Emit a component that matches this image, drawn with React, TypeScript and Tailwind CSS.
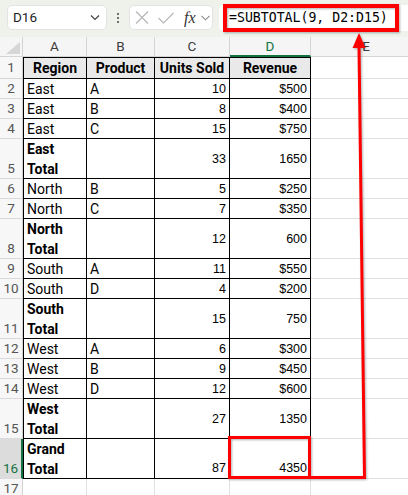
import React from "react";

type Row = {
  n: number;
  a?: string;
  b?: string;
  c?: string;
  d?: string;
  tall?: boolean;
  bold?: boolean;
  sel?: boolean;
};

const rows: Row[] = [
  { n: 2, a: "East", b: "A", c: "10", d: "$500" },
  { n: 3, a: "East", b: "B", c: "8", d: "$400" },
  { n: 4, a: "East", b: "C", c: "15", d: "$750" },
  { n: 5, a: "East Total", c: "33", d: "1650", tall: true, bold: true },
  { n: 6, a: "North", b: "B", c: "5", d: "$250" },
  { n: 7, a: "North", b: "C", c: "7", d: "$350" },
  { n: 8, a: "North Total", c: "12", d: "600", tall: true, bold: true },
  { n: 9, a: "South", b: "A", c: "11", d: "$550" },
  { n: 10, a: "South", b: "D", c: "4", d: "$200" },
  { n: 11, a: "South Total", c: "15", d: "750", tall: true, bold: true },
  { n: 12, a: "West", b: "A", c: "6", d: "$300" },
  { n: 13, a: "West", b: "B", c: "9", d: "$450" },
  { n: 14, a: "West", b: "D", c: "12", d: "$600" },
  { n: 15, a: "West Total", c: "27", d: "1350", tall: true, bold: true },
  { n: 16, a: "Grand Total", c: "87", d: "4350", tall: true, bold: true, sel: true },
];

const numFont = { fontFamily: '"Liberation Sans", Arial, sans-serif' };

function DataRow({ r }: { r: Row }) {
  const h = r.tall ? "h-[40px]" : "h-[20px]";
  const valJustify = r.sel ? "justify-end" : "justify-center";
  return (
    <div className={`flex ${h}`}>
      <div
        className={`w-[23px] shrink-0 flex items-end justify-center leading-[20px] text-[13.5px] border-b border-[#dadada] ${
          r.sel
            ? "bg-[#dcdcdc] text-[#137340] border-r-2 border-r-[#137340]"
            : "bg-[#f7f7f7] text-[#555] border-r border-r-[#d4d4d4]"
        }`}
      >
        {r.n}
      </div>
      <div
        className={`w-[64px] shrink-0 border-l border-r border-b border-black px-[3px] flex flex-col justify-center leading-[20px] text-[14px] text-black ${
          r.bold ? "font-bold" : ""
        }`}
      >
        {r.tall ? (
          <>
            <span>{r.a!.split(" ")[0]}</span>
            <span>{r.a!.split(" ")[1]}</span>
          </>
        ) : (
          <span>{r.a}</span>
        )}
      </div>
      <div className="w-[68px] shrink-0 border-r border-b border-black px-[3px] flex flex-col justify-center leading-[20px] text-[14px] text-black">
        <span>{r.b}</span>
      </div>
      <div
        className={`w-[75px] shrink-0 border-r border-b border-black px-[3px] flex flex-col ${valJustify} items-end leading-[20px] text-[12.5px] text-black`}
        style={numFont}
      >
        <span>{r.c}</span>
      </div>
      <div
        className={`w-[81px] shrink-0 border-r border-b border-black px-[3px] flex flex-col ${valJustify} items-end leading-[20px] text-[12.5px] text-black`}
        style={numFont}
      >
        <span>{r.d}</span>
      </div>
      <div className="w-[110px] shrink-0 border-b border-r border-[#e1e1e1]" />
    </div>
  );
}

export default function App() {
  return (
    <div
      className="relative w-[408px] h-[495px] overflow-hidden bg-white"
      style={{ fontFamily: 'Roboto, "Noto Sans", sans-serif' }}
    >
      {/* Toolbar */}
      <div className="h-[37px] bg-[#eef2eb] flex items-start pt-[5px] pl-[7px]">
        <div className="w-[100px] h-[25px] bg-white rounded-[5px] border border-[#e3e3e3] flex items-center justify-between pl-[5px] pr-[6px]">
          <span className="text-[13.5px] text-[#1f1f1f]">D16</span>
          <svg width="10" height="7" viewBox="0 0 10 7">
            <path d="M1 1.5 L5 5.5 L9 1.5" fill="none" stroke="#444" strokeWidth="1.2" />
          </svg>
        </div>
        <div className="w-[22px] h-[25px] flex flex-col items-center justify-center gap-[2px]">
          <span className="w-[2px] h-[2px] bg-[#444] rounded-full" />
          <span className="w-[2px] h-[2px] bg-[#444] rounded-full" />
          <span className="w-[2px] h-[2px] bg-[#444] rounded-full" />
        </div>
        <div className="w-[84px] h-[25px] bg-white rounded-[5px] border border-[#e3e3e3] flex items-center pl-[5px]">
          <svg width="14" height="13" viewBox="0 0 14 13">
            <path d="M1 0.5 L13 12.5 M13 0.5 L1 12.5" stroke="#b5b5b5" strokeWidth="1.1" fill="none" />
          </svg>
          <svg width="16" height="12" viewBox="0 0 16 12" className="ml-[9px]">
            <path d="M0.5 6 L5.5 11 L15.5 1" stroke="#b5b5b5" strokeWidth="1.1" fill="none" />
          </svg>
          <span
            className="ml-[10px] text-[16px] italic text-[#333] leading-none"
            style={{ fontFamily: '"Liberation Serif", "DejaVu Serif", serif' }}
          >
            fx
          </span>
          <svg width="9" height="6" viewBox="0 0 9 6" className="ml-[5px]">
            <path d="M0.5 0.8 L4.5 4.8 L8.5 0.8" fill="none" stroke="#888" strokeWidth="1.1" />
          </svg>
        </div>
        <div className="ml-[6px] flex-1 h-[26px] bg-white rounded-l-[5px] flex items-center pl-[10px]">
          <span
            className="text-[13.2px] text-black whitespace-nowrap"
            style={{ fontFamily: '"DejaVu Sans Mono", "Liberation Mono", monospace' }}
          >
            =SUBTOTAL(9, D2:D15)
          </span>
        </div>
      </div>

      {/* Column headers */}
      <div className="flex h-[20px] bg-[#f5f5f5] text-[13.5px] text-[#3c3c3c]">
        <div className="w-[23px] shrink-0 border-r border-b border-[#d4d4d4] relative flex items-end justify-end pr-[2px] pb-[2px]">
          <svg width="14" height="12" viewBox="0 0 14 12">
            <polygon points="14,0 14,12 0,12" fill="#d6d6d6" />
          </svg>
        </div>
        <div className="w-[64px] shrink-0 border-r border-b border-[#d4d4d4] flex items-center justify-center">A</div>
        <div className="w-[68px] shrink-0 border-r border-b border-[#d4d4d4] flex items-center justify-center">B</div>
        <div className="w-[75px] shrink-0 border-r border-b border-[#d4d4d4] flex items-center justify-center">C</div>
        <div className="w-[81px] shrink-0 border-r border-[#d4d4d4] border-b-2 border-b-[#137340] flex items-center justify-center text-[#137340]">
          D
        </div>
        <div className="w-[110px] shrink-0 border-b border-[#d4d4d4] flex items-center justify-center">E</div>
      </div>

      {/* Row 1 */}
      <div className="flex h-[22px]">
        <div className="w-[23px] shrink-0 flex items-center justify-center text-[13.5px] text-[#555] bg-[#f7f7f7] border-r border-b border-[#d4d4d4]">
          1
        </div>
        <div className="w-[64px] shrink-0 border border-black bg-[#e9e9e9] flex items-center justify-center text-[14px] font-bold text-black">
          Region
        </div>
        <div className="w-[68px] shrink-0 border-t border-r border-b border-black bg-[#e9e9e9] flex items-center justify-center text-[14px] font-bold text-black">
          Product
        </div>
        <div className="w-[75px] shrink-0 border-t border-r border-b border-black bg-[#e9e9e9] flex items-center justify-center text-[14px] font-bold text-black whitespace-nowrap">
          Units Sold
        </div>
        <div className="w-[81px] shrink-0 border-t border-r border-b border-black bg-[#e9e9e9] flex items-center justify-center text-[14px] font-bold text-black">
          Revenue
        </div>
        <div className="w-[110px] shrink-0 border-b border-r border-[#e1e1e1]" />
      </div>

      {rows.map((r) => (
        <DataRow key={r.n} r={r} />
      ))}

      {/* Row 17 */}
      <div className="flex h-[20px]">
        <div className="w-[23px] shrink-0 flex items-end justify-center leading-[20px] text-[13.5px] text-[#555] bg-[#f7f7f7] border-r border-b border-[#d4d4d4]">
          17
        </div>
        <div className="w-[64px] shrink-0 border-r border-b border-[#e1e1e1]" />
        <div className="w-[68px] shrink-0 border-r border-b border-[#e1e1e1]" />
        <div className="w-[75px] shrink-0 border-r border-b border-[#e1e1e1]" />
        <div className="w-[81px] shrink-0 border-r border-b border-[#e1e1e1]" />
        <div className="w-[110px] shrink-0 border-r border-b border-[#e1e1e1]" />
      </div>

      {/* Red annotations */}
      <svg
        className="absolute left-0 top-0 pointer-events-none"
        width="408"
        height="495"
        viewBox="0 0 408 495"
        style={{ filter: "drop-shadow(1px 1px 1px rgba(0,0,0,0.3))" }}
      >
        <rect x="225" y="6" width="172" height="24" fill="none" stroke="#ff0000" strokeWidth="4" />
        <rect x="229.5" y="437.5" width="80" height="40" fill="none" stroke="#ff0000" strokeWidth="3" />
        <polyline points="311,477.5 364.5,477.5 359,46" fill="none" stroke="#ff0000" strokeWidth="3" />
        <polygon points="359,33 352.5,48 365.5,48" fill="#ff0000" />
      </svg>
    </div>
  );
}
